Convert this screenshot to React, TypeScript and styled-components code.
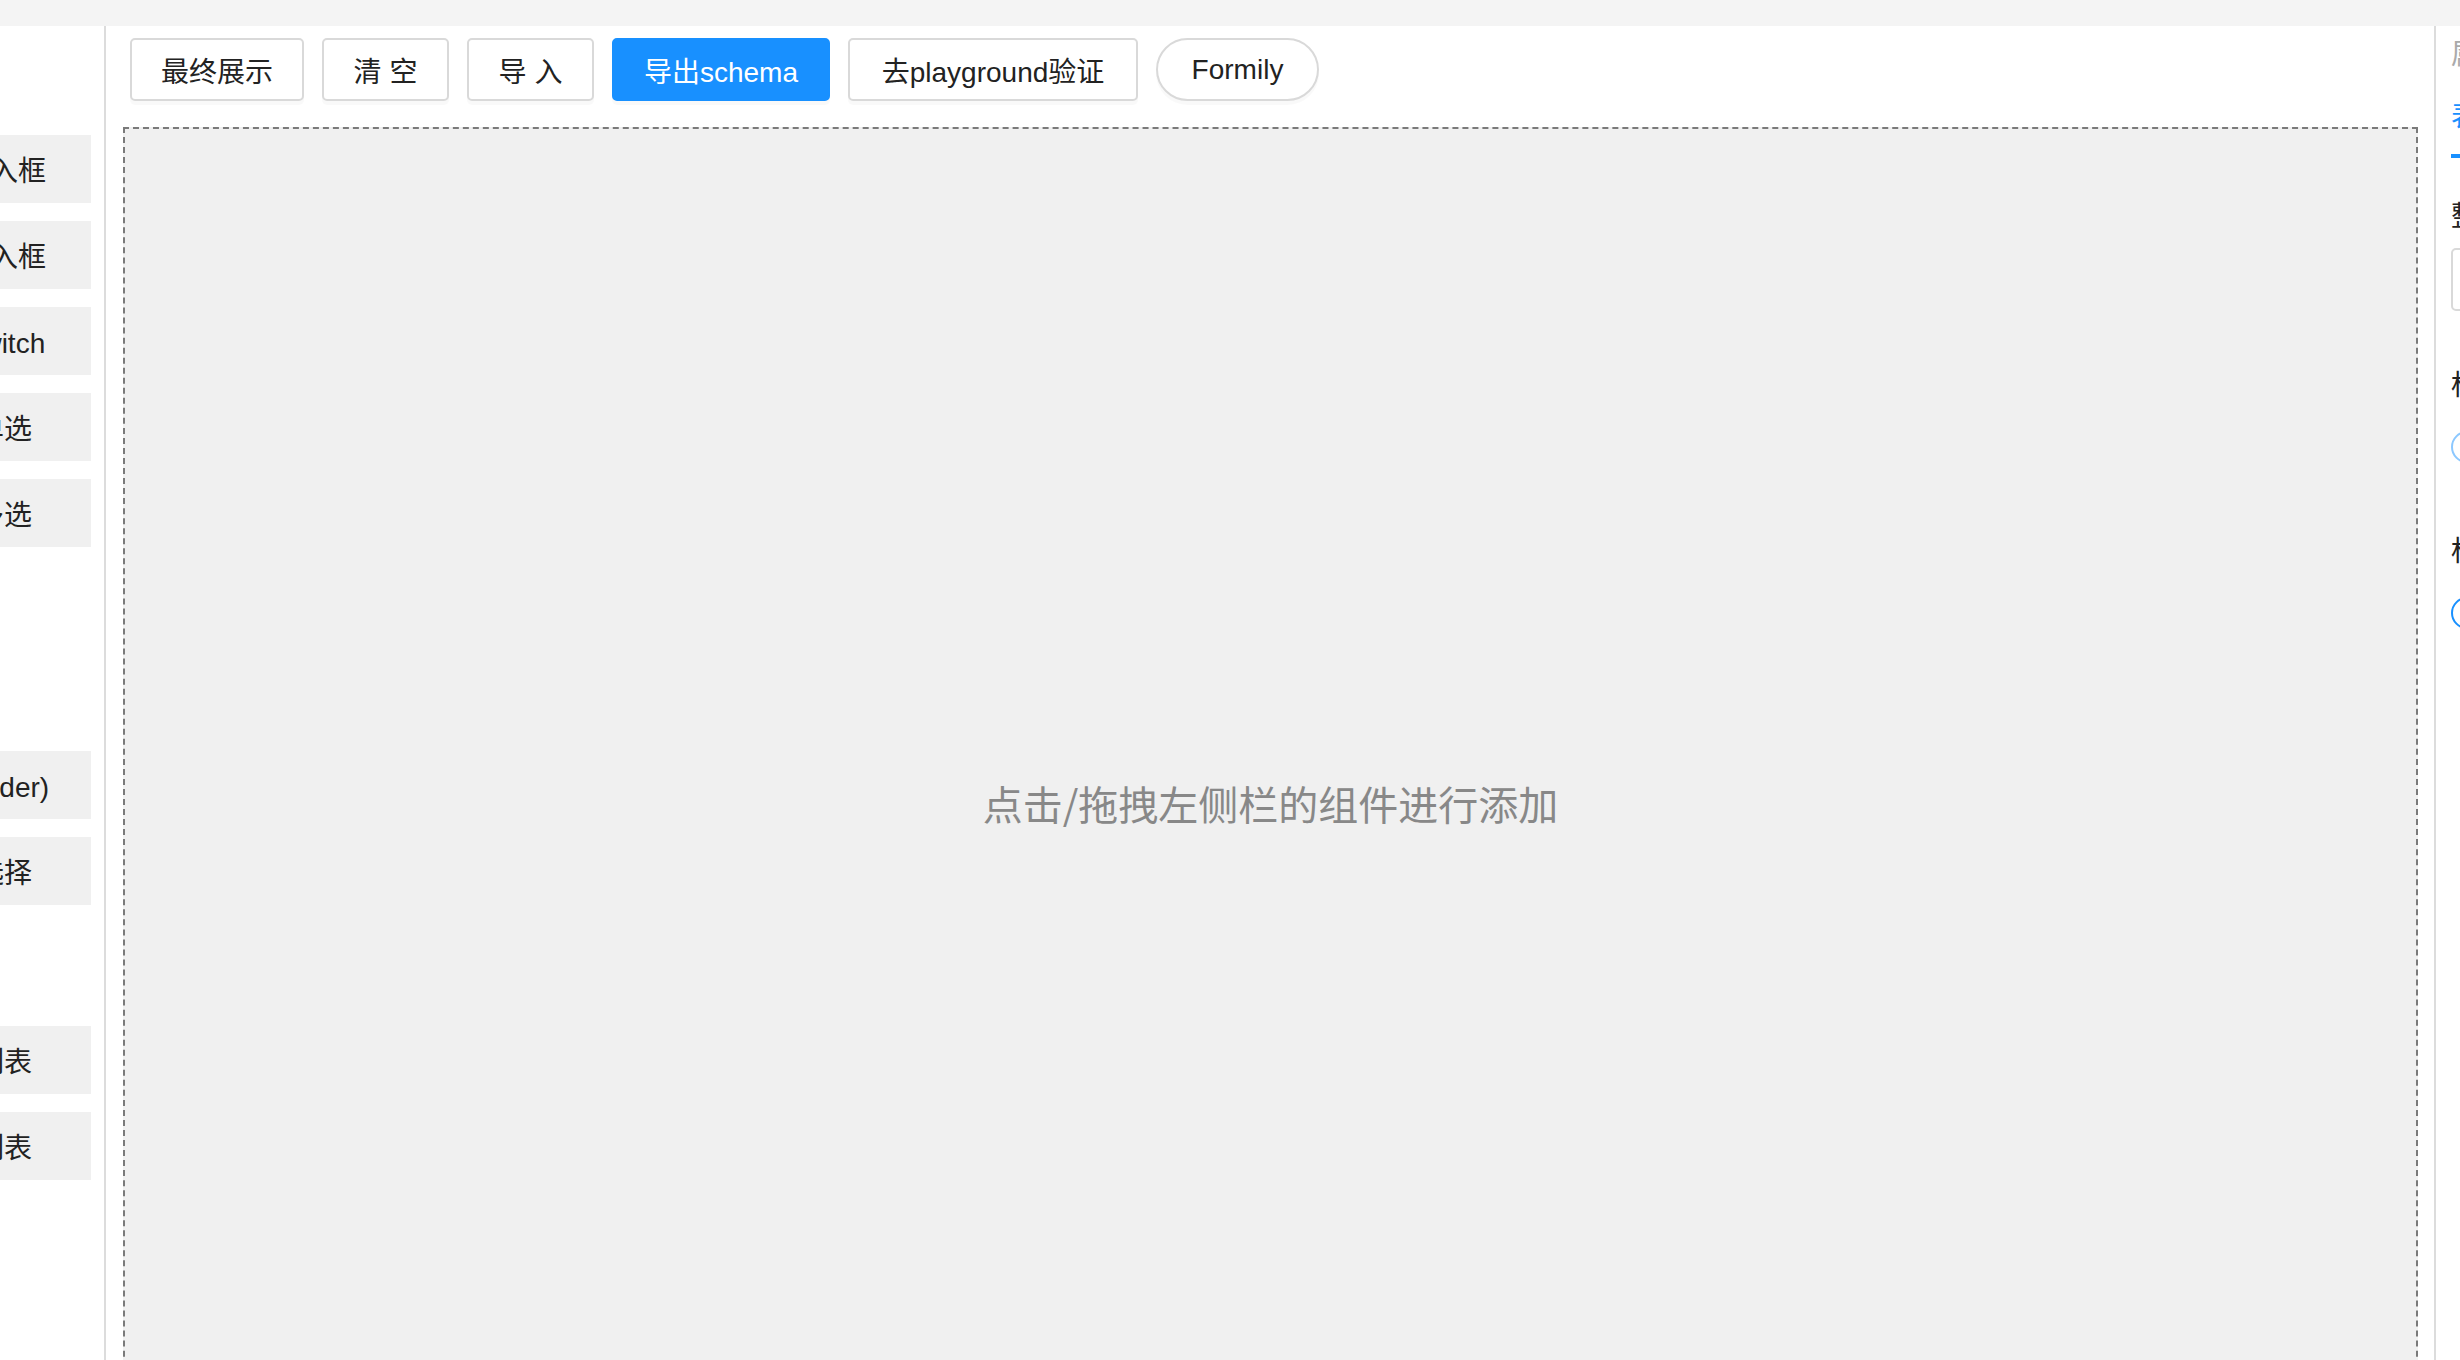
import React from "react";
import styled, { createGlobalStyle } from "styled-components";

const GlobalStyle = createGlobalStyle`
  html, body {
    margin: 0;
    padding: 0;
    overflow: hidden;
    background: #ffffff;
  }
  body {
    font-family: "Liberation Sans", "Noto Sans CJK SC", sans-serif;
    color: #222;
  }
  * { box-sizing: border-box; }
`;

const Page = styled.div`
  width: 2460px;
  height: 1360px;
  display: flex;
  flex-direction: column;
  overflow: hidden;
`;

const TopStrip = styled.div`
  flex: 0 0 26px;
  background: #f4f4f4;
`;

const Main = styled.div`
  flex: 1;
  display: flex;
  min-height: 0;
`;

const Sidebar = styled.aside`
  flex: 0 0 106px;
  border-right: 2px solid #dcdcdc;
  overflow: hidden;
`;

const SideColumn = styled.div`
  width: 230px;
  margin-left: -139px;
  padding-top: 19px;
  display: flex;
  flex-direction: column;
`;

const GroupTitle = styled.div<{ $h: number }>`
  height: ${(p) => p.$h}px;
  display: flex;
  align-items: center;
  font-size: 28px;
  color: #555;
  font-weight: bold;
  padding-left: 20px;
`;

const Group = styled.div`
  display: flex;
  flex-direction: column;
  gap: 18px;
  margin-bottom: 28px;
`;

const SideItem = styled.div`
  height: 68px;
  background: #f0f0f0;
  display: flex;
  align-items: center;
  justify-content: center;
  font-size: 28px;
  color: #222;
  white-space: nowrap;
`;

const Center = styled.section`
  flex: 1;
  min-width: 0;
  padding: 12px 16px 0 17px;
  display: flex;
  flex-direction: column;
  gap: 26px;
`;

const Toolbar = styled.div`
  display: flex;
  gap: 18px;
  padding-left: 7px;
`;

const Button = styled.button<{ $primary?: boolean; $round?: boolean; $w: number }>`
  height: 63px;
  width: ${(p) => p.$w}px;
  padding: 0;
  border: 2px solid ${(p) => (p.$primary ? "#1890ff" : "#d9d9d9")};
  border-radius: ${(p) => (p.$round ? "32px" : "5px")};
  background: ${(p) => (p.$primary ? "#1890ff" : "#ffffff")};
  color: ${(p) => (p.$primary ? "#ffffff" : "#222")};
  font-family: "Liberation Sans", "Noto Sans CJK SC", sans-serif;
  font-size: 28px;
  box-shadow: 0 4px 0 rgba(0, 0, 0, 0.025);
  white-space: pre;
  cursor: pointer;
`;

const Canvas = styled.div`
  flex: 0 0 1350px;
  border: 2px dashed #7a7a7a;
  border-bottom: none;
  background: #f0f0f0;
  display: flex;
  align-items: center;
  justify-content: center;
`;

const Placeholder = styled.div`
  font-size: 40px;
  color: #888;
  font-family: "Noto Sans CJK SC", sans-serif;
`;

const RightPanel = styled.aside`
  flex: 0 0 26px;
  border-left: 2px solid #dcdcdc;
  overflow: hidden;
`;

const RightInner = styled.div`
  width: 400px;
  padding: 6px 0 0 15px;
  display: flex;
  flex-direction: column;
`;

const PanelHeading = styled.div`
  font-size: 28px;
  line-height: 40px;
  color: #aaa;
  font-family: "Noto Sans CJK SC", sans-serif;
  margin-bottom: 22px;
`;

const Tabs = styled.div`
  display: flex;
  gap: 40px;
  margin-bottom: 36px;
`;

const Tab = styled.div<{ $active?: boolean }>`
  font-size: 28px;
  line-height: 40px;
  padding-bottom: 20px;
  font-family: "Noto Sans CJK SC", sans-serif;
  color: ${(p) => (p.$active ? "#1890ff" : "#333")};
  border-bottom: 4px solid ${(p) => (p.$active ? "#1890ff" : "transparent")};
`;

const FormItem = styled.div`
  display: flex;
  flex-direction: column;
  gap: 14px;
  margin-bottom: 52px;
`;

const Label = styled.div`
  font-size: 28px;
  line-height: 40px;
  color: #222;
  font-family: "Noto Sans CJK SC", sans-serif;
`;

const Input = styled.div`
  height: 63px;
  width: 340px;
  border: 2px solid #d9d9d9;
  border-radius: 5px;
  background: #fff;
`;

const RadioRow = styled.div`
  height: 60px;
  display: flex;
  align-items: center;
  gap: 12px;
  font-size: 28px;
  font-family: "Noto Sans CJK SC", sans-serif;
`;

const RadioCircle = styled.span<{ $checked?: boolean }>`
  width: 32px;
  height: 32px;
  border-radius: 50%;
  border: 2px solid ${(p) => (p.$checked ? "#1890ff" : "#8cc8ff")};
  background: #fff;
`;

const groups = [
  { title: "基础组件", h: 90, items: ["单行输入框", "多行输入框", "开关Switch", "下拉单选", "下拉多选"] },
  { title: "高级组件", h: 176, items: ["滑块(Slider)", "日期选择"] },
  { title: "布局组件", h: 93, items: ["卡片列表", "表格列表"] },
];

const buttons: { text: string; w: number; primary?: boolean; round?: boolean }[] = [
  { text: "最终展示", w: 174 },
  { text: "清 空", w: 127 },
  { text: "导 入", w: 127 },
  { text: "导出schema", w: 218, primary: true },
  { text: "去playground验证", w: 290 },
  { text: "Formily", w: 163, round: true },
];

export default function App() {
  return (
    <>
      <GlobalStyle />
      <Page>
        <TopStrip />
        <Main>
          <Sidebar>
            <SideColumn>
              {groups.map((g) => (
                <React.Fragment key={g.title}>
                  <GroupTitle $h={g.h}>{g.title}</GroupTitle>
                  <Group>
                    {g.items.map((it) => (
                      <SideItem key={it}>{it}</SideItem>
                    ))}
                  </Group>
                </React.Fragment>
              ))}
            </SideColumn>
          </Sidebar>
          <Center>
            <Toolbar>
              {buttons.map((b) => (
                <Button key={b.text} $w={b.w} $primary={b.primary} $round={b.round}>
                  {b.text}
                </Button>
              ))}
            </Toolbar>
            <Canvas>
              <Placeholder>点击/拖拽左侧栏的组件进行添加</Placeholder>
            </Canvas>
          </Center>
          <RightPanel>
            <RightInner>
              <PanelHeading>属性配置</PanelHeading>
              <Tabs>
                <Tab $active>表单属性</Tab>
                <Tab>组件属性</Tab>
              </Tabs>
              <FormItem>
                <Label>整体宽度</Label>
                <Input />
              </FormItem>
              <FormItem>
                <Label>标签宽度</Label>
                <RadioRow>
                  <RadioCircle />
                  固定
                </RadioRow>
              </FormItem>
              <FormItem>
                <Label>标签位置</Label>
                <RadioRow>
                  <RadioCircle $checked />
                  顶部
                </RadioRow>
              </FormItem>
            </RightInner>
          </RightPanel>
        </Main>
      </Page>
    </>
  );
}
